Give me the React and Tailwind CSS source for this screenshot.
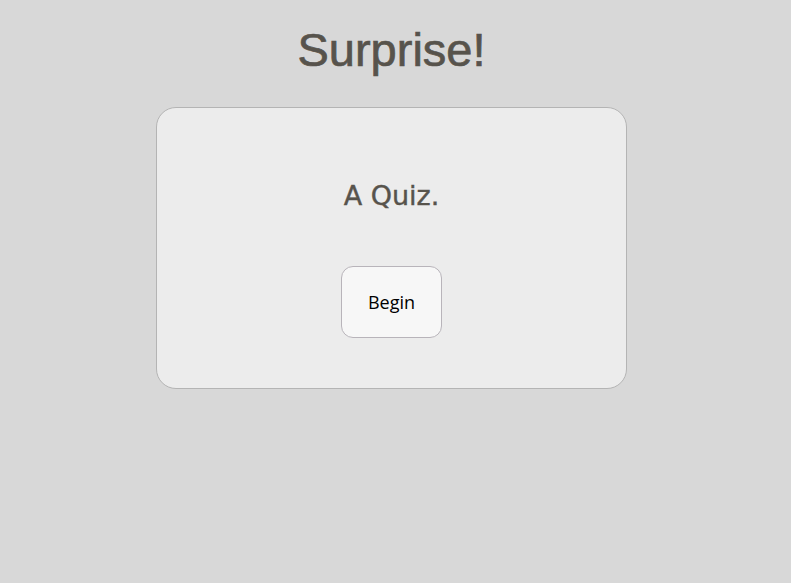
export default function App() {
  return (
    <div className="min-h-[583px] w-full bg-[#d8d8d8] flex flex-col items-center pr-[8px]">
      <h1 className="mt-[22px] h-[56px] leading-[56px] text-[47px] text-[#57534c] font-['Liberation_Sans',Arial,sans-serif] [-webkit-text-stroke:0.7px_#57534c]">
        Surprise!
      </h1>
      <div className="mt-[29px] w-[471px] h-[282px] rounded-[20px] border border-[#b4b4b4] bg-[#ececec] flex flex-col items-center">
        <p className="mt-[68px] h-[40px] leading-[40px] text-[27px] text-[#57534c] font-['DejaVu_Sans',sans-serif] [-webkit-text-stroke:0.4px_#57534c]">
          A Quiz.
        </p>
        <button
          type="button"
          className="mt-[50px] w-[101px] h-[72px] rounded-[12px] border border-[#b8b4ba] bg-[#f7f7f7] text-[18px] text-black font-['Open_Sans',sans-serif]"
        >
          Begin
        </button>
      </div>
    </div>
  )
}
